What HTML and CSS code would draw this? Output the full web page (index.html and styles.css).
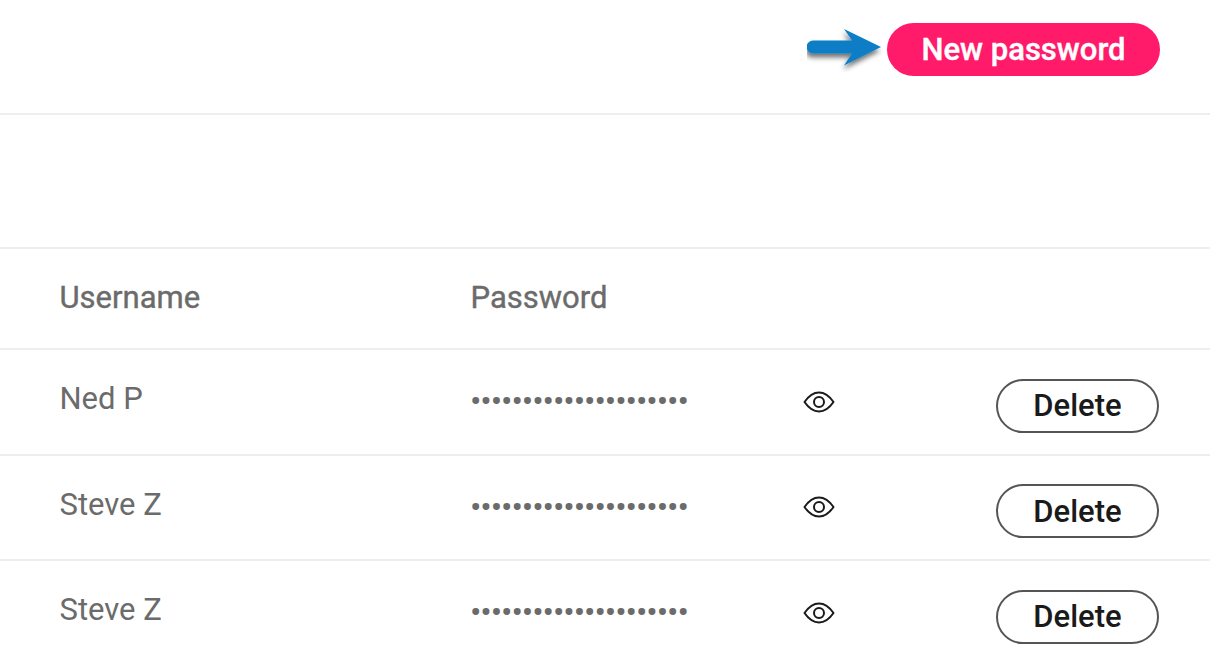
FILE: index.html
```html
<!DOCTYPE html>
<html>
<head>
    <title>Passwords</title>
    <link rel="stylesheet" href="styles.css">
</head>
<body>
    <svg width="0" height="0" class="icon-defs">
        <symbol id="eye" viewBox="0 0 32 24">
            <path d="M1.5 12 C6 5.500 11 2.500 16 2.500 C21 2.500 26 5.500 30.500 12 C26 18.500 21 21.500 16 21.500 C11 21.500 6 18.500 1.500 12 Z" fill="none" stroke="#1a1a1a" stroke-width="2" stroke-linejoin="round"/>
            <circle cx="16" cy="12" r="5" fill="none" stroke="#1a1a1a" stroke-width="2"/>
        </symbol>
    </svg>

    <div class="header">
        <svg class="arrow" width="76" height="44" viewBox="0 0 76 44">
            <defs>
                <filter id="arrowShadow" x="-20%" y="-30%" width="140%" height="170%">
                    <feDropShadow dx="-1" dy="4" stdDeviation="2.5" flood-color="#000" flood-opacity="0.55"/>
                </filter>
            </defs>
            <path d="M6 12.500 H45 L37 1 L74 19 L37 37.500 L45 25.500 H6 A6.500 6.500 0 0 1 6 12.500 Z" fill="#0a7ec6" filter="url(#arrowShadow)"/>
        </svg>
        <button class="new-btn">New password</button>
    </div>

    <div class="spacer"></div>

    <div class="row head-row">
        <div class="name">Username</div>
        <div class="name">Password</div>
    </div>

    <div class="row">
        <div class="name">Ned P</div>
        <div class="dots">&bull;&bull;&bull;&bull;&bull;&bull;&bull;&bull;&bull;&bull;&bull;&bull;&bull;&bull;&bull;&bull;&bull;&bull;&bull;&bull;&bull;</div>
        <svg class="eye" width="32" height="24"><use href="#eye"/></svg>
        <button class="delete-btn">Delete</button>
    </div>
    <div class="row">
        <div class="name">Steve Z</div>
        <div class="dots">&bull;&bull;&bull;&bull;&bull;&bull;&bull;&bull;&bull;&bull;&bull;&bull;&bull;&bull;&bull;&bull;&bull;&bull;&bull;&bull;&bull;</div>
        <svg class="eye" width="32" height="24"><use href="#eye"/></svg>
        <button class="delete-btn">Delete</button>
    </div>
    <div class="row">
        <div class="name">Steve Z</div>
        <div class="dots">&bull;&bull;&bull;&bull;&bull;&bull;&bull;&bull;&bull;&bull;&bull;&bull;&bull;&bull;&bull;&bull;&bull;&bull;&bull;&bull;&bull;</div>
        <svg class="eye" width="32" height="24"><use href="#eye"/></svg>
        <button class="delete-btn">Delete</button>
    </div>
</body>
</html>
```

FILE: styles.css
```css
html, body {
    height: 654px;
    overflow: hidden;
}
body {
    margin: 0;
    font-family: Roboto, sans-serif;
    background-color: #fff;
    color: #6b6b6b;
    font-size: 31px;
}
.icon-defs {
    display: block;
    height: 0;
}
.header {
    display: flex;
    justify-content: flex-end;
    align-items: center;
    height: 115px;
    padding: 0 50px 14px 0;
    box-sizing: border-box;
    border-bottom: 2px solid #eeeeee;
}
.arrow {
    margin-right: 4px;
}
.new-btn {
    width: 273px;
    height: 53px;
    border: none;
    border-radius: 27px;
    background-color: #ff1a6a;
    color: #fff;
    font-family: Roboto, sans-serif;
    font-size: 31px;
    font-weight: 500;
    -webkit-text-stroke: 0.4px #fff;
    padding: 0;
}
.spacer {
    height: 132px;
}
.row {
    display: grid;
    grid-template-columns: 411px 332px 1fr 163px;
    align-items: center;
    height: 103.500px;
    padding: 0 51px 0 59.500px;
    border-top: 2px solid #eeeeee;
}
.head-row {
    height: 99px;
}
.name {
    padding-bottom: 6px;
}
.head-row .name {
    padding-bottom: 2px;
    -webkit-text-stroke: 0.4px #6b6b6b;
}
.dots {
    font-size: 34px;
    letter-spacing: -1.100px;
    margin-left: -0.500px;
    padding-bottom: 1px;
}
.eye {
    display: block;
}
.delete-btn {
    width: 163px;
    height: 54px;
    margin-top: 8px;
    border: 2px solid #555;
    border-radius: 27px;
    background-color: #fff;
    color: #1a1a1a;
    font-family: Roboto, sans-serif;
    font-size: 31px;
    font-weight: 500;
    padding: 0;
}
```
